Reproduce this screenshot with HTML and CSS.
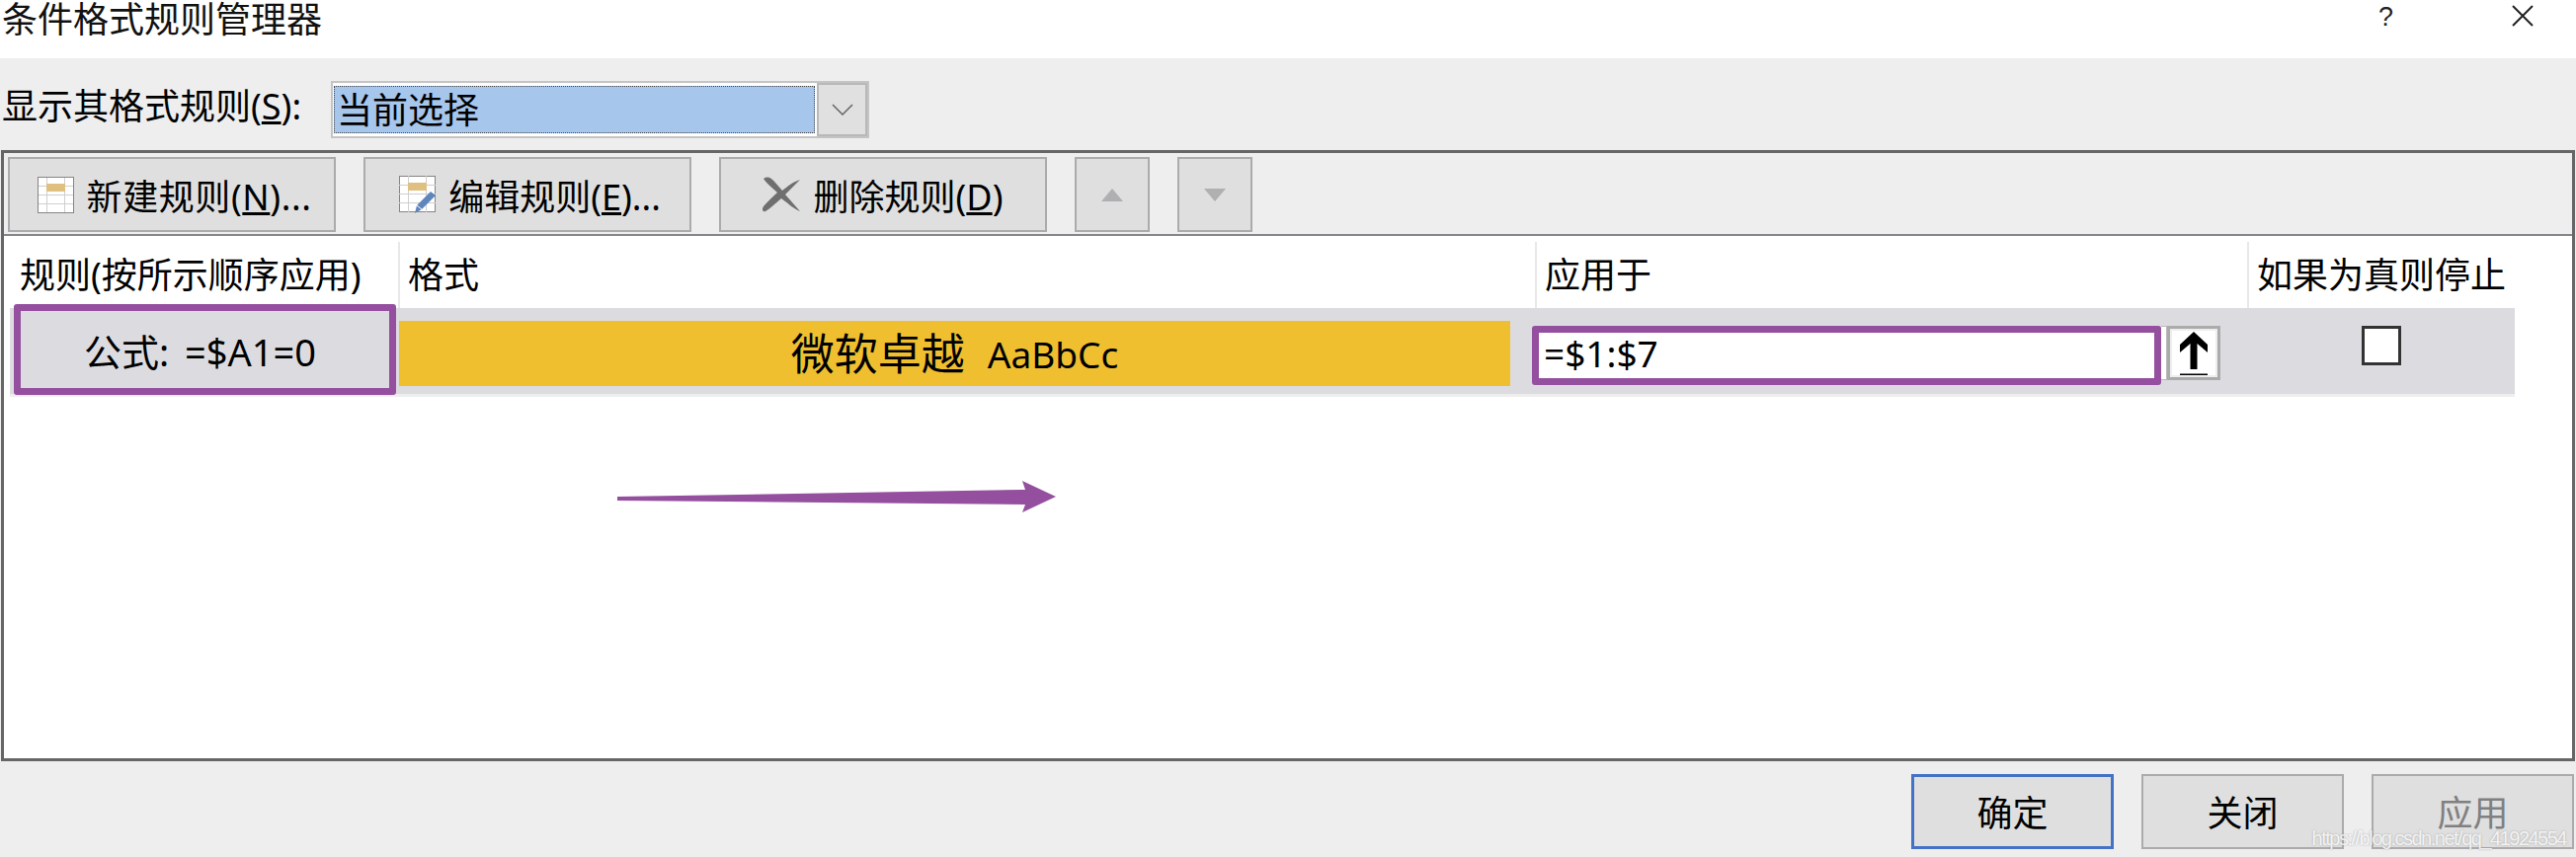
FILE: index.html
```html
<!DOCTYPE html>
<html lang="zh-CN">
<head>
    <meta charset="UTF-8">
    <title>条件格式规则管理器</title>
    <link rel="stylesheet" href="styles.css">
</head>
<body>
    <div class="dialog">
        <div class="titlebar">
            <span class="title">条件格式规则管理器</span>
            <span class="help">?</span>
            <svg class="close" width="22" height="22" viewBox="0 0 22 22" fill="none" stroke="#222" stroke-width="2">
                <path d="M1 1 21 21M21 1 1 21"/>
            </svg>
        </div>

        <div class="scope-row">
            <span class="scope-label">显示其格式规则(<u>S</u>):</span>
            <div class="combo">
                <div class="combo-value"><span>当前选择</span></div>
                <div class="combo-btn">
                    <svg width="22" height="12" viewBox="0 0 22 12" fill="none" stroke="#666" stroke-width="1.5">
                        <path d="M1 1 11 11 21 1"/>
                    </svg>
                </div>
            </div>
        </div>

        <div class="rules-box">
            <div class="toolbar">
                <button class="tool-btn btn-new">
                    <svg width="37" height="37" viewBox="0 0 37 37">
                        <rect x="0.5" y="0.5" width="36" height="36" fill="#fff" stroke="#858585"/>
                        <path d="M0 9.5H37M0 18.5H37M0 27.5H37M9.5 0V37M27.5 0V37" stroke="#cfcfcf"/>
                        <rect x="9" y="7" width="19" height="8" fill="#e0c081"/>
                        <rect x="0.5" y="0.5" width="36" height="36" fill="none" stroke="#858585"/>
                    </svg>
                    <span>新建规则(<u>N</u>)...</span>
                </button>
                <button class="tool-btn btn-edit">
                    <svg width="37" height="38" viewBox="0 0 37 38">
                        <rect x="0.5" y="0.5" width="36" height="36" fill="#fff" stroke="#858585"/>
                        <path d="M0 9.5H37M0 18.5H37M0 27.5H37M9.5 0V37M27.5 0V37" stroke="#cfcfcf"/>
                        <rect x="9" y="7" width="19" height="8" fill="#e0c081"/>
                        <path d="M16 38 18 30 32 16 37 20 23 34Z" fill="#5f85bd"/>
                        <path d="M18 30 23 34" stroke="#fff"/>
                    </svg>
                    <span>编辑规则(<u>E</u>)...</span>
                </button>
                <button class="tool-btn btn-delete">
                    <svg width="40" height="36" viewBox="0 0 40 36" fill="#6f6f6f">
                        <path d="M2 2C6-1 10 1 14 6L21 14C26 10 32 5 39 3 34 8 29 13 24 18L39 35C33 33 27 27 20 22 14 27 9 32 4 35 1 36 0 33 2 30 6 25 11 21 16 16 11 11 5 7 2 2Z"/>
                    </svg>
                    <span>删除规则(<u>D</u>)</span>
                </button>
                <button class="move-btn">
                    <svg width="22" height="13" viewBox="0 0 22 13"><path d="M11 0 22 13H0Z" fill="#b0afb1"/></svg>
                </button>
                <button class="move-btn">
                    <svg width="22" height="13" viewBox="0 0 22 13"><path d="M0 0H22L11 13Z" fill="#b0afb1"/></svg>
                </button>
            </div>

            <div class="rules-table">
                <div class="col-head head-rule">规则(按所示顺序应用)</div>
                <div class="col-head head-format">格式</div>
                <div class="col-head head-apply">应用于</div>
                <div class="col-head head-stop">如果为真则停止</div>

                <div class="row-cell cell-rule">
                    <div class="mark-box formula">公式: =$A1=0</div>
                </div>
                <div class="row-cell cell-format">
                    <div class="preview"><span class="preview-cn">微软卓越</span><span class="preview-en">AaBbCc</span></div>
                </div>
                <div class="row-cell cell-apply">
                    <div class="mark-box range">=$1:$7</div>
                    <div class="range-tail"></div>
                    <div class="ref-btn">
                        <svg width="28" height="44" viewBox="0 0 28 44" fill="#000">
                            <path d="M14 0 28 13V21L17.5 12V38H10.5V12L0 21V13Z"/>
                            <rect y="42.5" width="28" height="1.5"/>
                        </svg>
                    </div>
                </div>
                <div class="row-cell cell-stop">
                    <div class="checkbox"></div>
                </div>
            </div>
            <div class="row-strip"></div>

            <svg class="arrow" width="446" height="34" viewBox="0 0 446 34" fill="#954f9f">
                <path d="M0 16 410 9 413 9 410 0 444 16 410 32 413 24 0 20Z"/>
            </svg>
        </div>

        <div class="footer">
            <button class="dlg-btn default">确定</button>
            <button class="dlg-btn">关闭</button>
            <button class="dlg-btn disabled">应用</button>
        </div>

        <span class="watermark">https://blog.csdn.net/qq_41924554</span>
    </div>
</body>
</html>
```

FILE: styles.css
```css
* {
    margin: 0;
    padding: 0;
    box-sizing: border-box;
}

body {
    font-family: "Noto Sans", "Noto Sans CJK SC", sans-serif;
    font-size: 36px;
    line-height: 1;
    color: #000;
    background: #eeeeef;
    overflow: hidden;
}

button {
    font: inherit;
    color: inherit;
}

.dialog {
    position: relative;
    width: 2608px;
    height: 868px;
}

.titlebar {
    height: 59px;
    background: #fff;
    display: flex;
    align-items: flex-start;
    padding: 2px 0 0 2px;
    position: relative;
}

.title {
    line-height: 36px;
    color: #111;
}

.help {
    margin-left: auto;
    margin-top: 2px;
    font-size: 27px;
    color: #222;
    font-family: "Liberation Sans", sans-serif;
}

.close {
    margin: 3px 43px 0 120px;
}

.scope-row {
    height: 93px;
    display: flex;
    padding: 23px 0 0 2px;
}

.scope-label {
    width: 333px;
    padding-top: 8px;
    white-space: nowrap;
}

.combo {
    width: 545px;
    height: 58px;
    background: #fff;
    border: 2px solid #c4c4c4;
    display: flex;
    padding: 0 0 0 1px;
}

.combo-value {
    width: 488px;
    height: 48px;
    margin-top: 3px;
    background: #a6c6ec;
    border: 1px dotted #444;
    padding: 6px 0 0 2px;
}

.combo-btn {
    width: 51px;
    height: 54px;
    margin-left: 2px;
    background: #e0e0e0;
    border: 2px solid #b8b8b8;
    display: flex;
    align-items: center;
    justify-content: center;
}

.rules-box {
    position: relative;
    margin-left: 1px;
    width: 2606px;
    height: 619px;
    background: #fff;
    border: 3px solid #666;
}

.toolbar {
    height: 84px;
    background: #eeeeef;
    border-bottom: 2px solid #85858c;
    display: flex;
    gap: 28px;
    padding: 4px 0 0 4px;
}

.tool-btn {
    width: 332px;
    height: 76px;
    background: #dfdfdf;
    border: 2px solid #ababab;
    display: flex;
    align-items: center;
    justify-content: center;
    gap: 13px;
    white-space: nowrap;
}

.tool-btn span {
    margin-top: 6px;
}

.btn-new {
    padding-left: 5px;
    letter-spacing: 0.6px;
}

.btn-edit {
    padding-left: 5px;
}

.btn-delete svg {
    margin-left: -2px;
}

.move-btn {
    width: 76px;
    height: 76px;
    background: #dfdfdf;
    border: 2px solid #ababab;
    display: flex;
    align-items: center;
    justify-content: center;
}

.rules-table {
    display: grid;
    grid-template-columns: 393px 1151px 721px 271px;
    grid-template-rows: 73px 87px;
    margin-left: 6px;
}

.col-head {
    display: flex;
    align-items: center;
    border-left: 2px solid #e8e8e8;
    margin-top: 6px;
    padding: 0 0 0 8px;
    white-space: nowrap;
}

.head-rule {
    border-left: none;
    padding-left: 10px;
}

.row-cell {
    background: #dcdce0;
}

.mark-box {
    border: 7px solid #954f9f;
    border-radius: 3px;
}

.cell-rule {
    padding-left: 4px;
}

.formula {
    width: 387px;
    height: 92px;
    margin-top: -4px;
    position: relative;
    background: #dcdce0;
    display: flex;
    align-items: center;
    justify-content: center;
    font-size: 38px;
    word-spacing: 6px;
    padding: 4px 10px 0 0;
}

.cell-format {
    padding: 13px 0 0 1px;
}

.preview {
    width: 1125px;
    height: 66px;
    background: #f0bf2f;
    display: flex;
    align-items: center;
    justify-content: center;
    gap: 23px;
}

.preview-cn {
    font-size: 44px;
}

.preview-en {
    font-size: 37px;
}

.cell-apply {
    display: flex;
    align-items: flex-start;
    padding-top: 18px;
}

.range {
    width: 637px;
    height: 60px;
    margin-left: -3px;
    background: #fff;
    padding: 0 0 6px 5px;
    display: flex;
    align-items: center;
    position: relative;
    font-size: 37px;
}

.range-tail {
    width: 6px;
    height: 55px;
    background: #fff;
    border: 1px solid #bbb;
    border-left: none;
}

.ref-btn {
    width: 54px;
    height: 55px;
    background: #fff;
    border: 3px solid #ababab;
    outline: 2px solid #eee;
    outline-offset: -5px;
    display: flex;
    justify-content: center;
    padding-top: 3px;
}

.cell-stop {
    display: flex;
    justify-content: center;
    padding-top: 18px;
}

.checkbox {
    width: 40px;
    height: 40px;
    background: #fff;
    border: 3px solid #333;
}

.row-strip {
    margin-left: 6px;
    width: 2536px;
    height: 3px;
    background: #eeeeef;
}

.arrow {
    position: absolute;
    left: 621px;
    top: 332px;
}

.footer {
    display: flex;
    justify-content: flex-end;
    gap: 28px;
    padding: 13px 2px 0 0;
}

.dlg-btn {
    width: 205px;
    height: 76px;
    padding-top: 3px;
    background: #dfdfdf;
    border: 2px solid #ababab;
}

.dlg-btn.default {
    border: 3px solid #4472c4;
}

.dlg-btn.disabled {
    color: #808080;
}

.watermark {
    position: absolute;
    right: 10px;
    bottom: 9px;
    font-family: "Liberation Sans", sans-serif;
    font-size: 20px;
    letter-spacing: -1.5px;
    color: rgba(255, 255, 255, 0.85);
    text-shadow: 0 0 2px rgba(120, 120, 120, 0.6);
}
```
